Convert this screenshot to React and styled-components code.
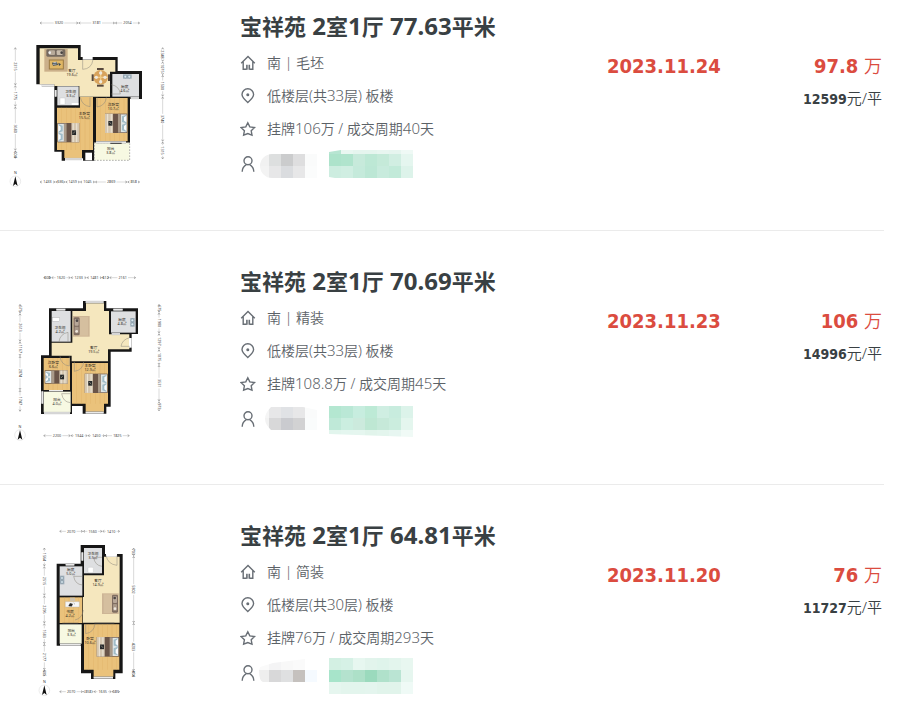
import styled, { createGlobalStyle } from "styled-components";

const GlobalStyle = createGlobalStyle`
    body {
        margin: 0;
        background: white;
        color: #394043;
        font-family: "Noto Sans", "Noto Sans CJK SC", sans-serif;
    }
`

/* ---------- floor plan parts ---------- */

const WALL = "#161616";
const TILE = "#f5e7be";
const WOOD = "#eac27b";
const STONE = "#dedfe1";
const BALCONY = "#f7f9e2";

const Floor = ({ d, fill }) => <path d={d} fill={fill} />;

const Planks = ({ x, y, w, h }) => {
    const lines = [];
    for (let i = 14; i < w; i += 14) {
        lines.push(<path key={i} d={`M${x + i} ${y}v${h}`} stroke="#dcae62" strokeWidth="2" opacity=".5" />);
    }
    return <g>{lines}</g>;
}

const Door = ({ d }) => <path d={d} fill="none" stroke="#8b877c" strokeWidth="1.5" />;

const Window = ({ d }) => (
    <g fill="none">
        <path d={d} stroke="#b9b9b9" strokeWidth="7" />
        <path d={d} stroke="#f2f2f2" strokeWidth="3" />
    </g>
)

const Bed = ({ x, y, w = 66, h = 58, flip }) => (
    <g transform={flip ? `translate(${x + w} ${y}) scale(-1 1)` : `translate(${x} ${y})`}>
        <rect width={w} height={h} fill="#695448" />
        <rect x="2" y="2" width={w * 0.27} height={h - 4} fill="#dfe5e5" />
        <path d={`M4 4l12 4v${h / 2 - 12}l-12 4zM4 ${h - 4}l12-4v-${h / 2 - 12}l-12-4z`} fill="#a0bcc8" />
        <path d={`M3 6l7 5v10l-7 5zM3 ${h - 6}l7-5v-10l-7-5z`} fill="#fbfbfb" />
        <rect x={w * 0.3} y="1" width={w * 0.12} height={h - 2} fill="#a99a89" />
        <rect x={w * 0.64} width={w * 0.36} height={h} fill="#d4c6b0" />
        <path d={`M${w * 0.72} 1v${h - 2}M${w * 0.88} 1v${h - 2}`} stroke="#eee7d8" strokeWidth="3" />
        <rect x={w * 0.67} y={h / 2 - 7} width="12" height="14" fill="#25282a" />
        <path d={`M${w * 0.67 + 3} ${h / 2 + 3}l6-7`} stroke="#a8a392" strokeWidth="2" />
    </g>
)

const Sofa = ({ x, y }) => (
    <g transform={`translate(${x} ${y})`}>
        <rect width="50" height="62" fill="#cdb596" />
        <rect x="3" y="3" width="42" height="56" fill="#d5bf9f" />
        <rect x="2" y="4" width="18" height="54" rx="4" fill="#7f6d61" />
        <rect x="5" y="9" width="12" height="20" rx="3" fill="#b7a798" />
        <rect x="5" y="32" width="12" height="20" rx="3" fill="#a99888" />
        <circle cx="12" cy="14" r="4" fill="#4d4746" />
        <circle cx="11" cy="46" r="4" fill="#eee7de" />
    </g>
)

const Stove = ({ x, y, vertical }) => (
    <g transform={`translate(${x} ${y})${vertical ? " rotate(90)" : ""}`}>
        <rect width="26" height="13" fill="#9cabb6" />
        <circle cx="7" cy="7" r="4" fill="#dce9f0" stroke="#5a7789" />
        <circle cx="19" cy="7" r="4" fill="#dce9f0" stroke="#5a7789" />
    </g>
)

const Room = ({ x, y, name, area }) => (
    <text x={x} y={y} textAnchor="middle" fontSize="11" fill="#2b2620">
        <tspan>{name}</tspan>
        <tspan x={x} dy="12">{area}</tspan>
    </text>
)

const DimRow = ({ y, stops, labels }) => (
    <g>
        {labels.map((label, i) => {
            const a = stops[i], b = stops[i + 1], mid = (a + b) / 2;
            const half = label.length * 3 + 4;
            return (
                <g key={i}>
                    {b - a > half * 2 + 8 && (
                        <path d={`M${a + 3} ${y}H${mid - half}M${mid + half} ${y}H${b - 3}`} stroke="#b5b5b5" strokeWidth="1.5" />
                    )}
                    <path d={`M${a + 6} ${y - 3}l-5 3 5 3M${b - 6} ${y - 3}l5 3-5 3`} fill="none" stroke="#666" strokeWidth="1.5" />
                    <text x={mid} y={y + 4} textAnchor="middle" fontSize="11" fill="#444">{label}</text>
                </g>
            )
        })}
    </g>
)

const DimColumn = ({ x, ...rest }) => (
    <g transform={`translate(${x} 0) rotate(90)`}>
        <DimRow y={0} {...rest} />
    </g>
)

const Compass = ({ x, y }) => (
    <g>
        <text x={x} y={y - 22} textAnchor="middle" fontSize="11" fill="#333">N</text>
        <circle cx={x} cy={y} r="16" fill="white" stroke="#d8d8d8" strokeWidth="1.5" />
        <path d={`M${x} ${y - 15}l7 29-7-6-7 6z`} fill="#111" />
    </g>
)

const PlanSvg = styled.svg`
    display: block;
    width: 180px;
    height: 180px;
    font-family: "Noto Sans", "Noto Sans CJK SC", sans-serif;
`

const PlanA = () => (
    <PlanSvg viewBox="0 30 540 540" role="img" aria-label="户型图">
        <DimRow y={69} stops={[119, 235, 345, 420]} labels={["3320", "3181", "2054"]} />
        <DimRow y={546} stops={[119, 166, 196, 240, 285, 382, 420]} labels={["1433", "636", "1459", "1045", "2869", "858"]} />
        <DimColumn x={46} stops={[142, 256, 320, 452, 476]} labels={["2315", "1775", "3680", "604"]} />
        <DimColumn x={488} stops={[142, 185, 225, 290, 425, 478]} labels={["2348", "1075", "1500", "3740", "1315"]} />
        <path d="M109 135H242V171H353V213H426V297H390V428H283V482H249V475H195V482H185V455H163V253H109z" fill={WALL} />
        <Floor d="M119 145H234V180H346V215H330V290H238V258H163V253H119z" fill={TILE} />
        <Floor d="M172 259H236V316H172z" fill={STONE} />
        <Floor d="M337 222H417V290H337z" fill={STONE} />
        <Floor d="M171 323H240V291H279V450H246V474H193V450H171z" fill={WOOD} />
        <Floor d="M288 294H383V424H288z" fill={WOOD} />
        <Planks x={171} y={323} w={108} h={127} />
        <Planks x={288} y={294} w={95} h={130} />
        <path d="M256 458h20v23h-20z" fill="white" />
        <path d="M283 428H389V481H283z" fill={BALCONY} stroke="#8d8d8d" strokeWidth="2" strokeDasharray="5 4" />
        <Window d="M125 257H162" />
        <Window d="M167 270V290" />
        <Window d="M195 477H246" />
        <Window d="M288 427H378" />
        <Window d="M392 294H417" />
        <path d="M331 430h34" stroke="#333" strokeWidth="3" />
        <rect x="133" y="147" width="70" height="68" fill="#cbb08a" />
        <rect x="139" y="148" width="57" height="22" rx="4" fill="#75695f" />
        <rect x="147" y="151" width="18" height="14" rx="3" fill="#b8aa9a" />
        <rect x="170" y="151" width="18" height="14" rx="3" fill="#c9bcac" />
        <circle cx="149" cy="158" r="4" fill="#eee" />
        <circle cx="185" cy="158" r="4" fill="#464242" />
        <rect x="148" y="180" width="42" height="27" fill="#e0b765" stroke="#9a7a44" strokeWidth="3" />
        <path d="M156 188l14-3 4 10-15 2zM175 188l8 5-6 5z" fill="#36434d" />
        <path d="M160 188l10-1M159 193l11-1" stroke="#f6f6f6" strokeWidth="2" />
        <g>
            <circle cx="302" cy="232" r="22" fill="#d8a35c" />
            <path d="M302 210V254M280 232H324" stroke="#f0cb86" strokeWidth="4" />
            <g fill="#57483d">
                <rect x="291" y="204" width="20" height="6" />
                <rect x="291" y="254" width="20" height="6" />
                <rect x="275" y="223" width="6" height="20" />
                <rect x="324" y="223" width="6" height="20" />
            </g>
            <g fill="#eee8dc">
                <circle cx="302" cy="219" r="5" />
                <circle cx="302" cy="245" r="5" />
                <circle cx="289" cy="232" r="5" />
                <circle cx="315" cy="232" r="5" />
            </g>
        </g>
        <Stove x={369} y={223} />
        <rect x="180" y="294" width="15" height="20" fill="white" stroke="#b9b9b9" />
        <rect x="215" y="309" width="20" height="6" fill="white" />
        <path d="M248 175h30" stroke="white" strokeWidth="8" />
        <Door d="M248 179V208Q275 207 279 179" />
        <Door d="M334 254Q358 258 361 282H334" />
        <Door d="M241 292Q246 317 270 320V292" />
        <Door d="M291 292V321Q317 317 319 292" />
        <Bed x={172} y={369} />
        <Bed x={315} y={341} w={67} flip />
        <Room x={216} y={217} name="客厅" area="19.6㎡" />
        <Room x={374} y={265} name="厨房" area="4.6㎡" />
        <Room x={212} y={279} name="卫生间" area="3.3㎡" />
        <Room x={253} y={344} name="主卧室" area="15.5㎡" />
        <Room x={340} y={317} name="次卧室" area="10.7㎡" />
        <Room x={332} y={449} name="阳台" area="3.8㎡" />
        <Compass x={46} y={544} />
    </PlanSvg>
)

const PlanB = () => (
    <PlanSvg viewBox="0 15 540 540" role="img" aria-label="户型图">
        <DimRow y={53} stops={[130, 154, 212, 260, 306, 328, 408]} labels={["608", "1620", "1233", "1481", "612", "2161"]} />
        <DimRow y={527} stops={[130, 212, 263, 315, 389]} labels={["2200", "1344", "1450", "1825"]} />
        <DimColumn x={60} stops={[132, 160, 245, 288, 390, 455]} labels={["675", "2613", "1167", "2874", "1747"]} />
        <DimColumn x={477} stops={[132, 158, 220, 268, 315, 424, 454]} labels={["675", "1980", "1297", "1075", "3531", "973"]} />
        <path d="M147 145H249V123H319V145H414V222H395V275H332V440H319V461H248V438H216V462H123V286H147z" fill={WALL} />
        <Floor d="M155 153H212V245H155z" fill={STONE} />
        <Floor d="M217 153H258V130H312V153H327V223H388V268H324V304H215V287H155V248H217z" fill={TILE} />
        <Floor d="M333 154H407V218H333z" fill={STONE} />
        <Floor d="M131 294H210V390H131z" fill={WOOD} />
        <Floor d="M216 309H324V431H312V455H257V431H216z" fill={WOOD} />
        <Floor d="M131 395H212V457H131z" fill={BALCONY} />
        <Planks x={131} y={294} w={79} h={96} />
        <Planks x={216} y={309} w={108} h={122} />
        <Window d="M257 126H311" />
        <Window d="M169 149H196" />
        <Window d="M340 149H368" />
        <Window d="M257 458H311" />
        <Window d="M132 459H210" />
        <Window d="M127 394V431" />
        <Window d="M335 222H360" />
        <path d="M147 392h42" stroke="#eee" strokeWidth="4" />
        <rect x="157" y="173" width="22" height="11" fill="white" stroke="#999" />
        <Stove x={404} y={174} vertical />
        <Sofa x={219} y={168} />
        <path d="M391 234V263" stroke="white" strokeWidth="8" />
        <Door d="M389 233Q366 239 363 259H389" />
        <Door d="M177 245Q180 222 204 217V245" />
        <Door d="M180 289Q183 315 208 318V289" />
        <Door d="M223 306V334Q249 330 251 306" />
        <Door d="M211 401H185Q189 426 211 428" />
        <Bed x={134} y={331} w={69} h={40} />
        <Bed x={254} y={341} w={69} flip />
        <Room x={180} y={208} name="卫生间" area="4.2㎡" />
        <Room x={366} y={183} name="厨房" area="4.8㎡" />
        <Room x={281} y={267} name="客厅" area="19.5㎡" />
        <Room x={160} y={311} name="次卧室" area="6.6㎡" />
        <Room x={270} y={321} name="主卧室" area="12.9㎡" />
        <Room x={171} y={422} name="阳台" area="4.0㎡" />
        <Compass x={60} y={525} />
    </PlanSvg>
)

const PlanC = () => (
    <PlanSvg viewBox="0 12 540 540" role="img" aria-label="户型图">
        <DimRow y={49} stops={[178, 249, 307, 360]} labels={["2070", "1560", "1410"]} />
        <DimRow y={530} stops={[178, 249, 281, 335, 360]} labels={["2070", "858", "1635", "585"]} />
        <DimColumn x={133} stops={[98, 154, 242, 325, 387, 465, 484]} labels={["1564", "2515", "2296", "1583", "2177", "605"]} />
        <DimColumn x={401} stops={[98, 123, 324, 468, 484]} labels={["703", "5802", "4203", "454"]} />
        <path d="M242 90H315V117H368V475H346V492H273V475H243V392H170V146H242z" fill={WALL} />
        <Floor d="M252 99H306V175H252z" fill={STONE} />
        <Floor d="M179 154H247V242H179z" fill={STONE} />
        <Floor d="M252 181H312V125H359V323H249V246H252z" fill={TILE} />
        <Floor d="M179 247H247V324H179z" fill={WOOD} />
        <Floor d="M179 328H245V386H179z" fill={BALCONY} />
        <Floor d="M252 328H358V464H340V485H281V464H252z" fill={WOOD} />
        <Planks x={179} y={247} w={68} h={77} />
        <Planks x={252} y={328} w={106} h={136} />
        <Window d="M197 149H223" />
        <Window d="M247 112V137" />
        <Window d="M180 389H242" />
        <Window d="M281 488H339" />
        <path d="M187 325h48M283 325h60" stroke="#333" strokeWidth="3" />
        <path d="M318 121h33" stroke="white" strokeWidth="9" />
        <Door d="M351 121V151Q323 148 318 121" />
        <Door d="M306 127H281Q284 151 306 154" />
        <Door d="M247 184H221Q225 208 247 210" />
        <Door d="M257 327V356Q282 352 285 327" />
        <Door d="M250 285Q247 310 225 315" />
        <rect x="264" y="157" width="16" height="16" rx="3" fill="white" stroke="#bbb" />
        <Stove x={193} y={182} vertical />
        <rect x="210" y="248" width="15" height="10" fill="#cfc3ae" />
        <path d="M196 260h42v16h-42z" fill="#f7f7f7" stroke="#a9a9a9" />
        <path d="M206 273l4-8 8 2-3 7zM221 264l4 4" fill="#292929" stroke="#292929" />
        <g transform="translate(659 0) scale(-1 1)">
            <Sofa x={303} y={235} />
        </g>
        <Bed x={290} y={366} w={67} h={59} flip />
        <Room x={279} y={121} name="卫生间" area="3.5㎡" />
        <Room x={212} y={169} name="厨房" area="5.0㎡" />
        <Room x={294} y={202} name="客厅" area="14.9㎡" />
        <Room x={210} y={295} name="书房" area="4.2㎡" />
        <Room x={214} y={352} name="阳台" area="3.3㎡" />
        <Room x={270} y={376} name="卧室" area="10.6㎡" />
        <Compass x={133} y={526} />
    </PlanSvg>
)

/* ---------- line icons ---------- */

const IconSvg = styled.svg`
    flex: none;
    width: 16px;
    height: 16px;
    fill: none;
    stroke: #686e75;
    stroke-width: 1.4;
`

const HomeIcon = () => (
    <IconSvg viewBox="0 0 16 16">
        <path d="M1.2 8.2L8 1.6l6.8 6.6M3.2 6.8v7.4h3.4M12.8 6.8v7.4H9.6" />
        <path d="M6.9 14.8v-5M9.3 14.8v-5" strokeWidth="1.6" />
    </IconSvg>
)

const PinIcon = () => (
    <IconSvg viewBox="0 0 16 16">
        <path d="M7.8 14.6C4.2 11.4 2 9 2 6.6a5.8 5.8 0 0 1 11.6 0c0 2.4-2.2 4.8-5.8 8z" />
        <circle cx="7.8" cy="6.8" r="1.5" fill="#686e75" stroke="none" />
    </IconSvg>
)

const StarIcon = () => (
    <IconSvg viewBox="0 0 16 16">
        <path d="M7.8 1.8l2 4.1 4.8.6-3.4 3.3.8 4.4-4.2-1.6-4.2 1.6.8-4.4L1 6.5l4.8-.6z" />
    </IconSvg>
)

const PersonIcon = () => (
    <IconSvg viewBox="0 0 16 16">
        <circle cx="8" cy="4.8" r="4" />
        <path d="M2.2 15.8c0-3.6 2-6 4.2-7.2M13.8 15.8c0-3.6-2-6-4.2-7.2" />
    </IconSvg>
)

/* ---------- pixelated agent names ---------- */

const MosaicSvg = styled.svg`
    flex: none;
    width: 156px;
    height: 44px;
`

const Mosaic = ({ id, clip, rows }) => (
    <MosaicSvg viewBox="0 0 156 44" shapeRendering="crispEdges" aria-hidden="true">
        <clipPath id={id}>
            <path d={clip} />
        </clipPath>
        <g clipPath={`url(#${id})`}>
            {rows.map(({ x, y, h = 12, colors }) => colors.map((color, i) => (
                <rect key={`${x}-${y}-${i}`} x={x + i * 12} y={y} width="12" height={h} fill={color} />
            )))}
        </g>
    </MosaicSvg>
)

const deals = [
    {
        id: "a",
        Plan: PlanA,
        title: "宝祥苑 2室1厅 77.63平米",
        facing: "南 | 毛坯",
        floor: "低楼层(共33层) 板楼",
        history: "挂牌106万 / 成交周期40天",
        date: "2023.11.24",
        total: "97.8",
        unit: "12599",
        clip: "M15 12H60V36H15A12 12 0 0 1 15 12zM72 10L84 8H156V36H78L72 35z",
        rows: [
            { x: 0, y: 12, colors: ["#f1f1f1", "#dddfdf", "#cbcccd", "#dededf", "#fafbfb"] },
            { x: 0, y: 24, colors: ["#f3f3f3", "#e7e7e8", "#dadcdf", "#e7e7e8", "#fbfcfc"] },
            { x: 72, y: 8, h: 4, colors: ["#b7e5d2", "#e9f7f1", "#e5f5ee", "#e5f5ee", "#e8f6f0", "#e6f5ef", "#eff9f5"] },
            { x: 72, y: 12, colors: ["#ade3cb", "#b0e4cd", "#c7eadb", "#bde8d5", "#c5ead9", "#d1eee2", "#e5f6ef"] },
            { x: 72, y: 24, colors: ["#cdede0", "#d0eee2", "#c5eadb", "#bce7d5", "#c8ebdd", "#c2ead9", "#ddf3ea"] },
        ],
    },
    {
        id: "b",
        Plan: PlanB,
        title: "宝祥苑 2室1厅 70.69平米",
        facing: "南 | 精装",
        floor: "低楼层(共33层) 板楼",
        history: "挂牌108.8万 / 成交周期45天",
        date: "2023.11.23",
        total: "106",
        unit: "14996",
        clip: "M14 10H46L60 13V33H14Q2 22 14 10zM72 9H156V40L72 37z",
        rows: [
            { x: 0, y: 9, colors: ["#f5f5f5", "#e7e7e8", "#e0e2e5", "#e7e7e8", "#fafbfb"] },
            { x: 0, y: 21, colors: ["#f2f2f2", "#d8d8d9", "#cacbcf", "#d2d2d3", "#fafcfc"] },
            { x: 72, y: 9, colors: ["#b4e7d1", "#bae8d6", "#c7eddf", "#bdead6", "#cfeee2", "#c8ecde", "#dcf3ea"] },
            { x: 72, y: 21, colors: ["#bfe9d8", "#cbeee0", "#cceadd", "#bee7d3", "#c6e9d9", "#cbedde", "#e4f6ee"] },
            { x: 72, y: 33, colors: ["#e2f5ed", "#e4f6ef", "#e5f6ef", "#e1f4eb", "#e3f5ed", "#e7f6f1", "#f0faf6"] },
        ],
    },
    {
        id: "c",
        Plan: PlanC,
        title: "宝祥苑 2室1厅 64.81平米",
        facing: "南 | 简装",
        floor: "低楼层(共30层) 板楼",
        history: "挂牌76万 / 成交周期293天",
        date: "2023.11.20",
        total: "76",
        unit: "11727",
        clip: "M3 16L16 12 48 8V19H60V31H6Q2 30 2 19zM72 7H156V43H72z",
        rows: [
            { x: 0, y: 7, colors: ["#fafafa", "#f4f4f5", "#f8f8f8", "#fafafa", "#fff"] },
            { x: 0, y: 19, colors: ["#eeeeee", "#d8d8d9", "#dfe0e1", "#c5c1be", "#f5faff"] },
            { x: 72, y: 7, colors: ["#d3f0e3", "#d6f1e6", "#e7f7f0", "#e2f4ec", "#dff4eb", "#e3f5ed", "#e8f7f0"] },
            { x: 72, y: 19, colors: ["#a7e4ca", "#b4e2ce", "#ade0c8", "#9bdabd", "#b0e1cb", "#bae4d3", "#e6f6ef"] },
            { x: 72, y: 31, colors: ["#e6f6ef", "#e3f5ed", "#e3f5ed", "#e4f5ee", "#e1f4eb", "#e1f4eb", "#effaf6"] },
        ],
    },
]

// numbers are set slightly larger than the characters beside them
const withDigits = (text, size) => text.split(/( ?[\d.]+)/).map((part, i) => (
    i % 2 ? <Digits key={i} $size={size}>{part}</Digits> : part
))

const DealItem = ({ deal }) => {
    const { Plan } = deal;
    return (
        <Item>
            <Plan />
            <Info>
                <Title>
                    <TitleLink href="#">{withDigits(deal.title, 24)}</TitleLink>
                </Title>
                <Meta><HomeIcon /><span>{deal.facing}</span></Meta>
                <Meta><PinIcon /><span>{withDigits(deal.floor, 15)}</span></Meta>
                <Meta><StarIcon /><span>{withDigits(deal.history, 15)}</span></Meta>
                <Agent>
                    <PersonIcon />
                    <Mosaic id={`mosaic-${deal.id}`} clip={deal.clip} rows={deal.rows} />
                </Agent>
            </Info>
            <DealDate>{deal.date}</DealDate>
            <Price>
                <Total><strong>{deal.total}</strong> <Wan>万</Wan></Total>
                <UnitPrice><strong>{deal.unit}</strong><Unit>元/平</Unit></UnitPrice>
            </Price>
        </Item>
    )
}

const App = () => {
    return (
        <>
            <GlobalStyle />
            <List>
                {deals.map((deal) => <DealItem key={deal.id} deal={deal} />)}
            </List>
        </>
    );
}

const List = styled.ul`
    list-style: none;
    margin: 0 26px 0 0;
    padding: 0;
`

const Item = styled.li`
    display: grid;
    grid-template-columns: 180px 1fr 114px 161px;
    padding: 34px 2px 39px 0;
    border-bottom: 1px solid #ebebeb;

    &:first-child {
        padding-top: 10px;
        padding-bottom: 40px;
    }

    &:last-child {
        padding-bottom: 0;
        border-bottom: none;
    }
`

const Info = styled.div`
    margin-left: 60px;
`

const Title = styled.h3`
    margin: 0 0 4px;
    font-size: 22px;
    font-weight: 700;
    line-height: 32px;
    height: 32px;
    white-space: nowrap;
`

const TitleLink = styled.a`
    color: inherit;
    text-decoration: none;
`

const Digits = styled.span`
    font-size: ${({ $size }) => $size}px;
`

const Meta = styled.div`
    display: flex;
    align-items: center;
    gap: 11px;
    height: 33px;
    font-size: 14px;
    font-weight: 350;
    line-height: 20px;
    color: #5c6267;
    white-space: nowrap;
`

const Agent = styled(Meta)`
    gap: 1px;
    height: 38px;
`

const DealDate = styled.div`
    padding-top: 41px;
    font-family: "DejaVu Sans Condensed", "Noto Sans", sans-serif;
    font-size: 20px;
    font-weight: 700;
    line-height: 30px;
    color: #db4c3f;
    white-space: nowrap;
`

const Price = styled.div`
    padding-top: 41px;
    font-family: "DejaVu Sans Condensed", "Noto Sans CJK SC", sans-serif;
    text-align: right;
    white-space: nowrap;
`

const Total = styled.div`
    height: 30px;
    font-size: 20px;
    line-height: 30px;
    color: #db4c3f;
`

const Wan = styled.span`
    font-size: 18px;
    font-weight: 350;
`

const UnitPrice = styled.div`
    height: 34px;
    font-size: 14px;
    line-height: 34px;
`

const Unit = styled.span`
    font-family: "Noto Sans", "Noto Sans CJK SC", sans-serif;
    font-size: 15px;
    font-weight: 350;
`

export default App;
